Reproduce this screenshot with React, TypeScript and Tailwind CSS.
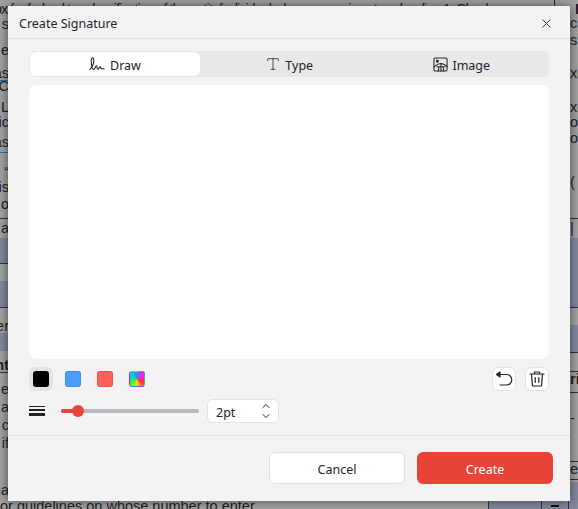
import React from 'react';
import { ChevronDown, ChevronUp, Type, X } from 'lucide-react';

// page behind the dialog, only its edges stay visible
const DocRow = ({ h, text = '', bold = false, line = '', tint = false }: { h: number; text?: string; bold?: boolean; line?: string; tint?: boolean }) => (
    <div className={`flex shrink-0 items-end ${bold ? 'font-bold' : ''} ${line} ${tint ? 'bg-[#83889e]' : ''}`} style={{ height: h }}>
        {text}
    </div>
);

const SignatureIcon = () => (
    <svg viewBox="0 0 16 16" className="h-4 w-4" fill="none" stroke="currentColor" strokeWidth="1.1" strokeLinecap="round" strokeLinejoin="round">
        <path d="M1 13.500C3 11 5.500 6 4.500 2.800C3.800 1 2 2 2.200 5C2.400 9 3 13.500 4.600 13.500C6 13.500 6.400 9.800 7.400 9.800C8.400 9.800 7.600 13.300 8.800 13.300C10 13.300 10 10.800 11 10.800C12 10.800 11.600 12.800 12.600 12.800L15.200 12.800" />
    </svg>
);

const ImageIcon = () => (
    <svg viewBox="0 0 16 16" className="h-[15px] w-[15px]" fill="none" stroke="currentColor" strokeWidth="1.1" strokeLinecap="round" strokeLinejoin="round">
        <rect x="1" y="1" width="14" height="14" rx="1.5" />
        <circle cx="4.6" cy="4.6" r="1" fill="currentColor" />
        <path d="M1 10.500C4 7.500 6.500 6.500 9 6.900C11 7.200 13 8.200 15 10M8.500 7V15M5.500 15L6.500 10.500M11.500 15L10.700 10.500M4 10.500H13" />
    </svg>
);

const UndoIcon = () => (
    <svg viewBox="0 0 18 18" className="h-[18px] w-[18px]" fill="none" stroke="currentColor" strokeWidth="1.2" strokeLinecap="round" strokeLinejoin="round">
        <path d="M3 4.500H11.500A5 5 0 0 1 11.500 15H5" />
        <path d="M1.500 4.500L5 2V7Z" fill="currentColor" />
    </svg>
);

const TrashIcon = () => (
    <svg viewBox="0 0 18 18" className="h-[18px] w-[18px]" fill="none" stroke="currentColor" strokeWidth="1.2" strokeLinecap="round" strokeLinejoin="round">
        <path d="M2 4H16M6.500 4V2H11.500V4M3.500 4L4.500 16H13.500L14.500 4M7.200 7.500V12.500M10.800 7.500V12.500" />
    </svg>
);

const LineWeightIcon = () => (
    <div className="flex w-4 flex-col gap-[2px]">
        <div className="h-px bg-[#222]" />
        <div className="h-[2px] bg-[#222]" />
        <div className="h-[3px] bg-[#222]" />
    </div>
);

const Swatch = ({ color }: { color: string }) => (
    <div className="flex h-6 w-6 items-center justify-center">
        <div className={`h-4 w-4 rounded-[3px] border border-black/10 ${color}`} />
    </div>
);

export default function App() {
    return (
        <div className="relative h-[509px] w-[578px] overflow-hidden bg-[#a3a3a3] font-['Liberation_Sans',sans-serif] text-[14.5px] leading-none text-[#222]">
            {/* Background document */}
            <div className="flex h-4 items-end whitespace-nowrap">
                <div className="-ml-[6px] w-[560px] shrink-0 overflow-hidden tracking-[-1.05px]">ox for federal tax classification of the entity/individual whose name is entered on line 1. Check</div>
                <div className="h-full w-[21px] shrink-0 border-l border-[#222]" />
                <div className="font-bold">I</div>
            </div>
            <div className="flex h-[483px] justify-between whitespace-nowrap">
                <div className="flex w-[9px] flex-col overflow-hidden [&>div]:justify-end">
                    <DocRow h={15} text="s" />
                    <DocRow h={26} text="e" />
                    <DocRow h={24} text="as" line="border-b border-b-[#2a6ab0]" />
                    <DocRow h={12} text="C" />
                    <DocRow h={21} text="L" />
                    <DocRow h={15} text="fic" />
                    <DocRow h={20} text="as" />
                    <DocRow h={4} line="border-b border-b-[#2a6ab0]" />
                    <DocRow h={26} text={'“'} />
                    <DocRow h={15} text="is" />
                    <DocRow h={17} text="o" />
                    <DocRow h={8} line="border-b border-b-[#333]" />
                    <DocRow h={16} text="a" />
                    <DocRow h={3} />
                    <DocRow h={26} tint line="border-b border-b-[#333]" />
                    <DocRow h={17} />
                    <DocRow h={27} tint line="border-b border-b-[#333]" />
                    <DocRow h={25} text="er" />
                    <DocRow h={18} tint />
                    <DocRow h={22} bold text="nt" line="border-b border-b-[#333]" />
                    <DocRow h={23} text="e" />
                    <DocRow h={18} text="a" />
                    <DocRow h={18} text="c" />
                    <DocRow h={18} text="if" />
                    <DocRow h={47} text="na" />
                </div>
                <div className="flex w-2 flex-col overflow-hidden">
                    <DocRow h={14} text="c" />
                    <DocRow h={17} text="s" />
                    <DocRow h={33} text="xe" />
                    <DocRow h={34} text="xe" />
                    <DocRow h={15} text="o" />
                    <DocRow h={16} text="o-" />
                    <DocRow h={44} text="(" />
                    <DocRow h={30} line="border-b border-b-[#333]" />
                    <DocRow h={16} text="| a" />
                    <DocRow h={3} />
                    <DocRow h={70} tint line="border-b border-b-[#333]" />
                    <DocRow h={17} />
                    <DocRow h={28} tint line="border-b border-b-[#333]" />
                    <DocRow h={19} line="border-b border-b-[#333]" />
                    <DocRow h={14} bold text="rit" />
                    <DocRow h={7} line="border-b border-b-[#333]" />
                    <DocRow h={32} text="-" />
                    <DocRow h={37} line="border-b border-b-[#333]" />
                    <DocRow h={14} text="er" />
                    <DocRow h={4} line="border-b border-b-[#333]" />
                    <DocRow h={2} />
                    <DocRow h={17} tint />
                </div>
            </div>
            <div className="flex h-[10px] justify-between whitespace-nowrap">
                <div>or guidelines on whose number to enter.</div>
                <div className="flex w-[90px] bg-[#83889e]">
                    <div className="w-[53px] border-l border-[#333]" />
                    <div className="flex w-[27px] items-center justify-center border-l border-[#333]">
                        <div className="mt-1 h-[2px] w-2 bg-[#111]" />
                    </div>
                    <div className="flex-1 border-l border-[#333]" />
                </div>
            </div>

            {/* Dialog */}
            <div className="absolute left-2 top-[6px] flex h-[495px] w-[562px] flex-col bg-[#f3f3f3] font-['Noto_Sans',sans-serif] text-[12.5px] text-[#1f2328] shadow-[0_0_10px_rgba(0,0,0,0.55)]">
                <div className="flex h-[33px] shrink-0 items-center justify-between border-b border-[#e2e2e2] pl-[11px] pr-4">
                    <span className="pt-1">Create Signature</span>
                    <X className="mt-[2px] h-[15px] w-[15px]" strokeWidth={1.4} />
                </div>

                <div className="flex flex-1 flex-col px-[21px] pt-3">
                    <div className="flex h-[26px] rounded-md bg-[#e8e8ea] p-px">
                        <div className="flex w-[170px] items-center justify-center gap-[5px] rounded-md bg-white">
                            <SignatureIcon />
                            <span className="pt-1">Draw</span>
                        </div>
                        <div className="ml-[3px] flex flex-1 items-center justify-center gap-1">
                            <Type className="h-4 w-4" strokeWidth={1.2} />
                            <span className="pt-1">Type</span>
                        </div>
                        <div className="flex flex-1 items-center justify-center gap-1">
                            <ImageIcon />
                            <span className="pt-1">Image</span>
                        </div>
                    </div>

                    <div className="mt-2 h-[274px] rounded-lg bg-white" />

                    <div className="mt-2 flex items-center justify-between">
                        <div className="flex items-center gap-2">
                            <div className="flex h-6 w-6 items-center justify-center rounded-md bg-[#e4e4e4]">
                                <div className="h-4 w-4 rounded-[3px] bg-black" />
                            </div>
                            <Swatch color="bg-[#4a9eff]" />
                            <Swatch color="bg-[#ff5f5a]" />
                            <Swatch color="bg-[conic-gradient(from_0deg,#1e90ff,#ff20e0,#ff2a40,#ffdd00,#33ee55,#00d8c8,#1e90ff)]" />
                        </div>
                        <div className="flex items-center gap-[9px]">
                            <div className="flex h-6 w-6 items-center justify-center rounded-md border border-[#e4e4e4] bg-white">
                                <UndoIcon />
                            </div>
                            <div className="flex h-6 w-6 items-center justify-center rounded-md border border-[#e4e4e4] bg-white">
                                <TrashIcon />
                            </div>
                        </div>
                    </div>

                    <div className="mt-2 flex items-center">
                        <LineWeightIcon />
                        <div className="relative ml-4 h-1 w-[138px] rounded-full bg-[#b9bac0]">
                            <div className="h-1 w-[17px] rounded-full bg-[#e94438]" />
                            <div className="absolute left-[11px] top-[-4px] h-3 w-3 rounded-full bg-[#e94438]" />
                        </div>
                        <div className="ml-2 flex h-6 w-[72px] items-center justify-between rounded-md border border-[#e4e4e4] bg-white pl-2 pr-[6px]">
                            <span className="pt-1">2pt</span>
                            <div className="flex flex-col">
                                <ChevronUp className="-mb-[2px] h-3 w-3" strokeWidth={2} />
                                <ChevronDown className="h-3 w-3" strokeWidth={2} />
                            </div>
                        </div>
                    </div>
                </div>

                <div className="flex h-[66px] shrink-0 items-start justify-end gap-3 border-t border-[#e2e2e2] pr-[17px] pt-4">
                    <div className="flex h-8 w-[136px] items-center justify-center rounded-md border border-[#e2e2e2] bg-white pt-1">Cancel</div>
                    <div className="flex h-8 w-[136px] items-center justify-center rounded-md bg-[#e94438] pt-1 text-white">Create</div>
                </div>
            </div>
        </div>
    );
}
